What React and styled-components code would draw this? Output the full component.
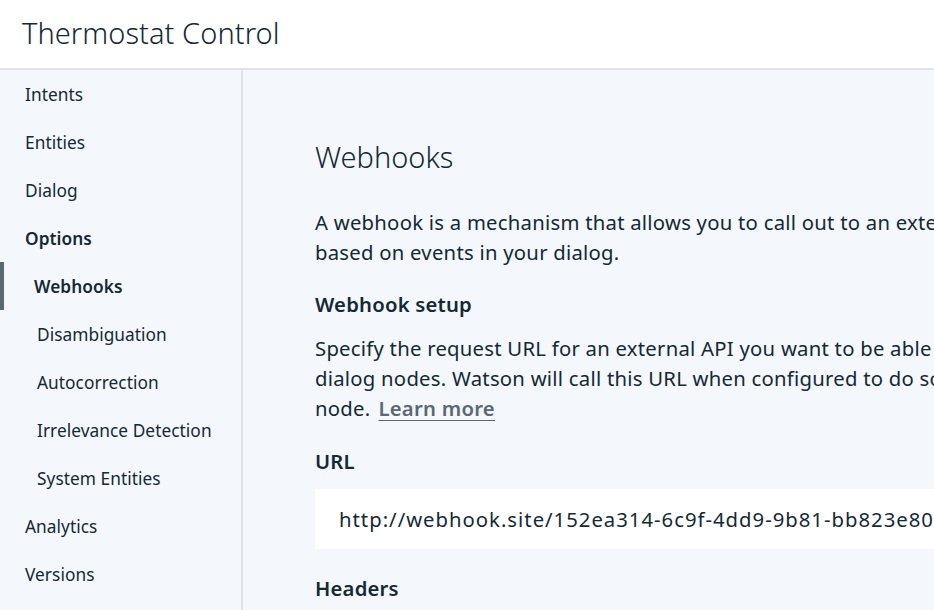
import React from 'react';
import styled, { createGlobalStyle } from 'styled-components';

const COLORS = {
  text: '#152935',
  muted: '#5a6872',
  border: '#dfe3e6',
  panel: '#f4f7fb',
  white: '#ffffff',
};

const GlobalStyle = createGlobalStyle`
  html, body {
    margin: 0;
    padding: 0;
    overflow: hidden;
    background: ${COLORS.panel};
  }
  body {
    font-family: "Noto Sans", "Open Sans", sans-serif;
    color: ${COLORS.text};
  }
`;

const Page = styled.div`
  display: flex;
  flex-direction: column;
  width: 934px;
  height: 610px;
  overflow: hidden;
`;

const Header = styled.header`
  flex: 0 0 auto;
  height: 68px;
  display: flex;
  align-items: center;
  padding-left: 22px;
  background: ${COLORS.white};
  border-bottom: 2px solid ${COLORS.border};
`;

const Title = styled.h1`
  margin: 0;
  font-size: 29px;
  font-weight: 300;
  letter-spacing: 0.05px;
  padding-bottom: 4px;
`;

const Body = styled.div`
  flex: 1;
  display: flex;
  min-height: 0;
`;

const Sidebar = styled.nav`
  flex: 0 0 241px;
  background: ${COLORS.panel};
  border-right: 2px solid ${COLORS.border};
  display: flex;
  flex-direction: column;
`;

const NavItem = styled.div`
  height: 48px;
  display: flex;
  align-items: center;
  font-size: 17.3px;
  letter-spacing: 0.05px;
  padding-left: ${({ $sub, $active }) => ($active ? '30px' : $sub ? '37px' : '25px')};
  font-weight: ${({ $bold }) => ($bold ? 600 : 400)};
  border-left: ${({ $active }) => ($active ? `4px solid ${COLORS.muted}` : 'none')};
`;

const Main = styled.main`
  flex: 1;
  min-width: 0;
  overflow: hidden;
  padding: 0 0 0 72px;
`;

const Content = styled.div`
  width: 1000px;
`;

const Heading = styled.h2`
  margin: 70px 0 0;
  font-size: 29px;
  font-weight: 300;
  line-height: 34px;
`;

const Para = styled.p`
  margin: ${({ $top }) => $top || '0'} 0 0;
  font-size: 20.3px;
  letter-spacing: 0.25px;
  line-height: 30px;
`;

const Line = styled.span`
  display: block;
  white-space: nowrap;
`;

const SubHeading = styled.h3`
  margin: ${({ $top }) => $top} 0 0;
  font-size: 20.3px;
  font-weight: 600;
  letter-spacing: 0.2px;
  line-height: 30px;
`;

const Link = styled.a`
  color: ${COLORS.muted};
  font-weight: 600;
  margin-left: 8px;
  text-decoration: underline;
  text-underline-offset: 4px;
  text-decoration-thickness: 1px;
`;

const Input = styled.div`
  margin-top: 13px;
  height: 60px;
  background: ${COLORS.white};
  display: flex;
  align-items: center;
  padding-left: 24px;
  font-size: 20.3px;
  letter-spacing: 1px;
  white-space: nowrap;
`;

const NAV = [
  { label: 'Intents' },
  { label: 'Entities' },
  { label: 'Dialog' },
  { label: 'Options', bold: true },
  { label: 'Webhooks', sub: true, active: true, bold: true },
  { label: 'Disambiguation', sub: true },
  { label: 'Autocorrection', sub: true },
  { label: 'Irrelevance Detection', sub: true },
  { label: 'System Entities', sub: true },
  { label: 'Analytics' },
  { label: 'Versions' },
];

export default function App() {
  return (
    <>
      <GlobalStyle />
      <Page>
        <Header>
          <Title>Thermostat Control</Title>
        </Header>
        <Body>
          <Sidebar>
            {NAV.map((item) => (
              <NavItem key={item.label} $sub={item.sub} $active={item.active} $bold={item.bold}>
                {item.label}
              </NavItem>
            ))}
          </Sidebar>
          <Main>
            <Content>
              <Heading>Webhooks</Heading>
              <Para $top="33px">
                <Line>A webhook is a mechanism that allows you to call out to an external program</Line>
                <Line>based on events in your dialog.</Line>
              </Para>
              <SubHeading $top="22px">Webhook setup</SubHeading>
              <Para $top="14px">
                <Line>Specify the request URL for an external API you want to be able to call from</Line>
                <Line>dialog nodes. Watson will call this URL when configured to do so in a dialog</Line>
                <Line>
                  node.<Link href="#">Learn more</Link>
                </Line>
              </Para>
              <SubHeading $top="23px">URL</SubHeading>
              <Input>http://webhook.site/152ea314-6c9f-4dd9-9b81-bb823e80b6f1</Input>
              <SubHeading $top="24px">Headers</SubHeading>
            </Content>
          </Main>
        </Body>
      </Page>
    </>
  );
}
